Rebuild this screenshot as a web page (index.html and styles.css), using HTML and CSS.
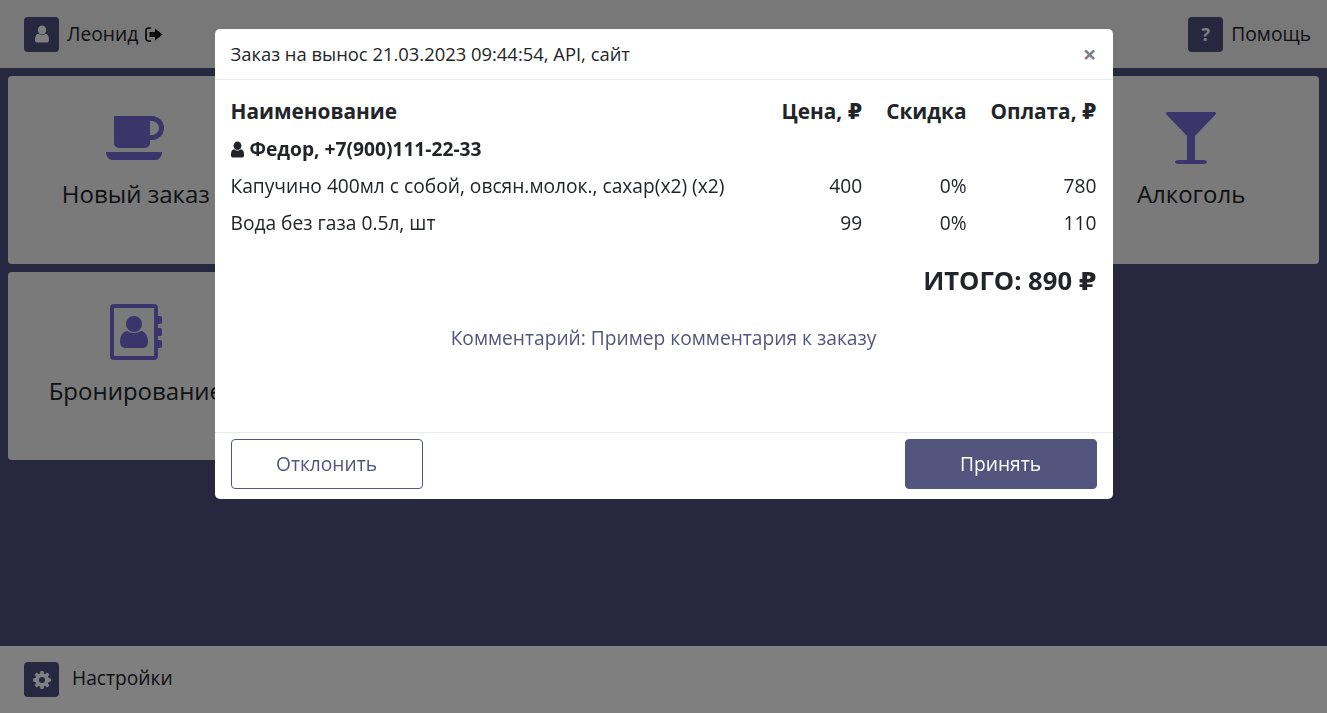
FILE: index.html
```html
<!DOCTYPE html>
<html lang="ru">
<head>
<meta charset="utf-8">
<title>Заказ</title>
<link rel="stylesheet" href="styles.css">
</head>
<body>
<div class="app">
  <header class="bar top">
    <div class="bar-group">
      <span class="icon-box"><svg class="box-icon" viewBox="0 0 16 18"><ellipse cx="8" cy="5" rx="4.2" ry="4.6"/><path d="M1 15c0-4 1.200-6 3.500-6.200C5.500 9.700 6.700 10.200 8 10.200s2.500-.5 3.500-1.400C13.800 9 15 11 15 15c0 1.800-1.100 2.600-2.600 2.600H3.600C2.100 17.600 1 16.800 1 15z"/></svg></span>
      <span class="bar-text">Леонид</span>
      <svg class="logout" viewBox="0 0 18 15"><path d="M6 1H3.500A2.500 2.500 0 0 0 1 3.500v8A2.500 2.500 0 0 0 3.500 14H6" fill="none" stroke="currentColor" stroke-width="1.700"/><path d="M4.500 5H10V1.500L17.500 7.500 10 13.500V10H4.500z"/></svg>
    </div>
    <div class="bar-group">
      <span class="icon-box"><span class="box-glyph">?</span></span>
      <span class="bar-text">Помощь</span>
    </div>
  </header>
  <main class="tiles">
    <div class="tile">
      <span class="tile-art"><svg class="tile-icon coffee" width="58" height="44" viewBox="0 0 58 44"><path fill-rule="evenodd" d="M8 0H46a12 12 0 0 1 12 12a12 12 0 0 1-12 12H44v3a5 5 0 0 1-5 5H13a5 5 0 0 1-5-5zM44 5v14h2a7 7 0 0 0 0-14z"/><path d="M0 36h56c0 4-3 8-6 8H6c-3 0-6-4-6-8z"/></svg></span>
      <span class="tile-label">Новый заказ</span>
    </div>
    <div class="tile"></div>
    <div class="tile"></div>
    <div class="tile"></div>
    <div class="tile">
      <span class="tile-art"><svg class="tile-icon" width="50" height="52" viewBox="0 0 50 52"><path d="M1.500 0h47c1.300 0 2 1.300 1 2.400L29 24v24h8c2.500 0 4 .8 4 2s-1.500 2-4 2H13c-2.500 0-4-.8-4-2s1.500-2 4-2h8V24L.5 2.400C-.5 1.300.2 0 1.500 0z"/></svg></span>
      <span class="tile-label">Алкоголь</span>
    </div>
    <div class="tile tile-low">
      <span class="tile-art"><svg class="tile-icon" width="52" height="56" viewBox="0 0 52 56"><path fill-rule="evenodd" d="M4 0h40a4 4 0 0 1 4 4v48a4 4 0 0 1-4 4H4a4 4 0 0 1-4-4V4a4 4 0 0 1 4-4zM4 4v48h40V4z"/><path d="M48 12h2.500A1.500 1.500 0 0 1 52 13.500v5a1.500 1.500 0 0 1-1.500 1.500H48zM48 24h2.500a1.500 1.500 0 0 1 1.500 1.500v5a1.500 1.500 0 0 1-1.500 1.500H48zM48 36h2.500a1.500 1.500 0 0 1 1.500 1.500v5a1.500 1.500 0 0 1-1.500 1.500H48z"/><circle cx="24" cy="20" r="8"/><path d="M10 38c0-6 3-11 7-11 2 1 4.500 2 7 2s5-1 7-2c4 0 7 5 7 11 0 3-2 6-5 6H15c-3 0-5-3-5-6z"/></svg></span>
      <span class="tile-label">Бронирование</span>
    </div>
  </main>
  <footer class="bar bottom">
    <div class="bar-group">
      <span class="icon-box"><svg class="box-icon gear" viewBox="0 0 18 18"><path fill-rule="evenodd" d="M7.500 0h3l.4 2.400 1.400.6 2-1.400 2.100 2.100-1.400 2 .6 1.400L18 7.500v3l-2.400.4-.6 1.400 1.400 2-2.100 2.100-2-1.400-1.400.6-.4 2.400h-3l-.4-2.400-1.400-.6-2 1.400-2.100-2.100 1.400-2-.6-1.400L0 10.500v-3l2.400-.4.6-1.400-1.400-2 2.100-2.100 2 1.400 1.400-.6zM9 6a3 3 0 1 0 0 6 3 3 0 0 0 0-6z"/></svg></span>
      <span class="bar-text settings">Настройки</span>
    </div>
  </footer>
</div>

<div class="backdrop">
  <section class="modal">
    <div class="modal-head">
      <span class="modal-title">Заказ на вынос 21.03.2023 09:44:54, API, сайт</span>
      <span class="close">×</span>
    </div>
    <div class="modal-body">
      <table class="order">
        <thead>
          <tr><th class="name">Наименование</th><th>Цена, <span class="rub">₽</span></th><th>Скидка</th><th>Оплата, <span class="rub">₽</span></th></tr>
        </thead>
        <tbody>
          <tr class="client"><td class="name" colspan="4"><svg class="client-icon" viewBox="0 0 16 18"><ellipse cx="8" cy="5" rx="4.200" ry="4.600"/><path d="M1 15c0-4 1.200-6 3.500-6.200C5.500 9.700 6.700 10.200 8 10.200s2.500-.5 3.500-1.400C13.800 9 15 11 15 15c0 1.800-1.100 2.600-2.600 2.600H3.600C2.100 17.600 1 16.800 1 15z"/></svg>Федор, +7(900)111-22-33</td></tr>
          <tr><td class="name">Капучино 400мл с собой, овсян.молок., сахар(x2) (x2)</td><td>400</td><td>0%</td><td>780</td></tr>
          <tr><td class="name">Вода без газа 0.5л, шт</td><td>99</td><td>0%</td><td>110</td></tr>
        </tbody>
      </table>
      <div class="total">ИТОГО: 890 <span class="rub">₽</span></div>
      <div class="comment">Комментарий: Пример комментария к заказу</div>
    </div>
    <div class="modal-foot">
      <button class="btn btn-outline" type="button">Отклонить</button>
      <button class="btn btn-solid" type="button">Принять</button>
    </div>
  </section>
</div>
</body>
</html>
```
FILE: styles.css
```css
* { box-sizing: border-box; }
html, body { height: 100%; }
body {
  margin: 0;
  font-family: "Open Sans", "Noto Sans", sans-serif;
  font-size: 19.2px;
  color: #212529;
  overflow: hidden;
}
.app {
  height: 100vh;
  display: flex;
  flex-direction: column;
  background: #4e5080;
}
.bar {
  display: flex;
  align-items: center;
  justify-content: space-between;
  padding: 0 16px 0 24px;
}
.top { height: 68px; background: #f0f0f0; }
.bottom { height: 67px; background: #fff; }
.bar-group { display: flex; align-items: center; }
.icon-box {
  width: 35px;
  height: 35px;
  border-radius: 4px;
  background: #4e5080;
  color: #fff;
  display: flex;
  align-items: center;
  justify-content: center;
  flex: none;
}
.box-icon { width: 16px; height: 18px; fill: currentColor; }
.gear { width: 18px; height: 18px; }
.box-glyph { font-weight: 700; font-size: 18px; line-height: 1; }
.bar-text { margin-left: 8px; line-height: 24px; }
.settings { margin-left: 13px; position: relative; top: -2px; }
.logout { width: 18px; height: 15px; margin-left: 7px; fill: currentColor; color: #111; }
.tiles {
  flex: 1;
  display: grid;
  grid-template-columns: repeat(5, 1fr);
  grid-auto-rows: 188px;
  align-content: start;
  gap: 8px;
  padding: 8px;
}
.tile {
  background: #f5f5f5;
  border-radius: 4px;
  display: flex;
  flex-direction: column;
  align-items: center;
  padding-top: 34px;
  overflow: hidden;
}
.tile-art { height: 56px; display: flex; align-items: center; flex: none; }
.tile-icon { fill: #766ad6; display: block; }
.coffee { margin-left: -2px; }
.tile-label { font-size: 24px; line-height: 32px; margin-top: 12px; white-space: nowrap; }
.tile-low { padding-top: 32px; }
.tile-low .tile-label { margin-top: 15px; }
.backdrop {
  position: fixed;
  inset: 0;
  background: rgba(0, 0, 0, .5);
  padding: 29px 0 0 214.5px;
}
.modal {
  width: 898px;
  height: 470px;
  background: #fff;
  border-radius: 5px;
  display: flex;
  flex-direction: column;
}
.modal-head {
  height: 51px;
  flex: none;
  display: flex;
  align-items: center;
  justify-content: space-between;
  padding: 0 16px 1px;
  border-bottom: 1px solid #e9ecef;
}
.modal-title { font-size: 18.4px; }
.close { font-size: 24px; font-weight: 700; color: #808080; line-height: 1; }
.modal-body { flex: 1; padding: 13px 16px 0; }
.order { width: 100%; border-collapse: collapse; }
.order th, .order td {
  height: 37px;
  padding: 0 0 0 24px;
  text-align: right;
  white-space: nowrap;
  font-weight: 400;
  font-size: 19.2px;
}
.order th { font-size: 20.8px; font-weight: 700; padding-bottom: 2px; }
.order .name { text-align: left; padding-left: 0; width: 100%; }
.client td { font-weight: 700; }
.client-icon { width: 15px; height: 17px; fill: currentColor; margin: 0 5px 0 -1px; vertical-align: -2px; }
.rub { font-family: "DejaVu Sans", sans-serif; }
.total { font-size: 25.6px; font-weight: 700; text-align: right; line-height: 32px; margin-top: 24px; }
.comment { color: #52567f; text-align: center; line-height: 24px; margin-top: 29px; }
.modal-foot {
  height: 67px;
  flex: none;
  border-top: 1px solid #e9ecef;
  padding: 6px 16px 0;
  display: flex;
  justify-content: space-between;
  align-items: flex-start;
}
.btn {
  width: 192px;
  height: 50px;
  padding: 0 0 2px;
  border-radius: 4px;
  font: inherit;
  border: 1px solid #52567f;
}
.btn-outline { background: #fff; color: #52567f; }
.btn-solid { background: #52567f; color: #fff; }
```
